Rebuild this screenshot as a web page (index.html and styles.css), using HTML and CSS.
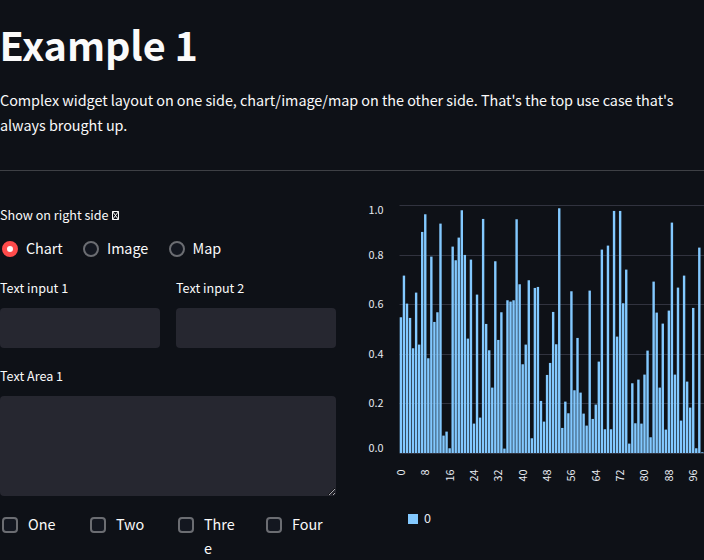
FILE: index.html
```html
<!DOCTYPE html>
<html lang="en">
<head>
<meta charset="utf-8">
<title>Example 1</title>
<link rel="stylesheet" href="styles.css">
</head>
<body>
<main class="page">
  <h1 class="title">Example 1</h1>
  <p class="intro">Complex widget layout on one side, chart/image/map on the other side. That's the top use case that's always brought up.</p>
  <hr class="divider">
  <div class="columns">
    <section class="controls">
      <div class="label">Show on right side <svg class="glyph" width="7" height="9" viewBox="0 0 7 9"><path d="M.5.5h6v8h-6zM.5.5l6 8M6.5.5l-6 8"/></svg></div>
      <div class="radios">
        <div class="radio"><span class="dot checked"></span><span>Chart</span></div>
        <div class="radio"><span class="dot"></span><span>Image</span></div>
        <div class="radio"><span class="dot"></span><span>Map</span></div>
      </div>
      <div class="inputs">
        <div class="field"><div class="label">Text input 1</div><input class="box" type="text" aria-label="Text input 1"></div>
        <div class="field"><div class="label">Text input 2</div><input class="box" type="text" aria-label="Text input 2"></div>
      </div>
      <div class="field area-field"><div class="label">Text Area 1</div><textarea class="box area" aria-label="Text Area 1"></textarea></div>
      <div class="checks">
        <div class="check"><span class="tick"></span><span class="check-text">One</span></div>
        <div class="check"><span class="tick"></span><span class="check-text">Two</span></div>
        <div class="check"><span class="tick"></span><span class="check-text">Three</span></div>
        <div class="check"><span class="tick"></span><span class="check-text">Four</span></div>
      </div>
    </section>
    <section class="chart">
      <svg class="plot" width="344" height="340" viewBox="360 195 344 340">
        <g id="grid" class="grid"></g>
        <g id="bars" class="bars"></g>
        <g id="labels" class="axis"></g>
        <rect class="swatch" x="408" y="514" width="10" height="10"/>
        <text class="legend" x="424" y="522.5">0</text>
      </svg>
    </section>
  </div>
</main>
<script src="chart.js"></script>
</body>
</html>
```
FILE: styles.css
```css
* { box-sizing: border-box; }
body {
  margin: 0;
  background: #0e1117;
  color: #fafafa;
  font-family: "Noto Sans CJK SC", sans-serif;
  font-size: 14.4px;
  line-height: 24px;
  letter-spacing: -0.035px;
  overflow: hidden;
}
.page { width: 704px; height: 560px; overflow: hidden; }
.title { margin: 0; padding: 17px 0; font-size: 39.6px; line-height: 53px; font-weight: 700; letter-spacing: -0.1px; text-indent: -0.5px; }
.intro { margin: 0; line-height: 25px; }
.divider { margin: 33px 0 0; border: 0; border-top: 1px solid #3e4045; }
.columns { display: flex; gap: 24px; padding-top: 24px; }
.controls { width: 336px; flex: none; padding-top: 9px; }
.label { font-size: 12.6px; line-height: 22px; white-space: nowrap; letter-spacing: 0; }
.glyph { margin-left: 0.6px; fill: none; stroke: #fafafa; stroke-width: 1; }
.radios { display: flex; gap: 20px; height: 24px; margin-top: 10px; }
.radio { display: flex; align-items: center; gap: 8px; padding-left: 2px; margin-right: -1.5px; letter-spacing: -0.1px; }
.dot { width: 16px; height: 16px; margin-top: 2px; border: 2px solid #6b6d72; border-radius: 50%; background: #131720; }
.dot.checked { border: 5px solid #ff4b4b; background: #fafafa; }
.inputs { display: flex; gap: 16px; margin-top: 17px; }
.field { flex: 1; }
.box { display: block; width: 100%; height: 40px; margin: 9px 0 0; padding: 0 12px; border: 0; border-radius: 4px; background: #262730; color: #fafafa; font: inherit; }
.area-field { margin-top: 17px; }
.area { height: 100px; resize: vertical; color-scheme: dark; }
.checks { display: flex; gap: 16px; margin-top: 16px; }
.check { display: flex; width: 72px; padding-left: 2px; }
.tick { flex: none; width: 16px; height: 16px; margin: 5px 10px 0 0; border: 2px solid #6b6d72; border-radius: 4px; background: #131720; }
.check-text { width: 34px; overflow-wrap: anywhere; }
.chart { width: 344px; flex: none; }
.plot { display: block; }
.grid { stroke: #31333f; stroke-width: 1; }
.bars { fill: #83c9ff; }
.swatch { fill: #83c9ff; }
.axis { fill: #e6eaf1; font-size: 10.8px; letter-spacing: 0; }
.legend { fill: #e6eaf1; font-size: 12.6px; }
```
FILE: chart.js
```js
const NS = "http://www.w3.org/2000/svg";
const tops = [366,241,325,368,459,292,448,110,57,489,184,380,351,85,721,709,759,154,195,127,45,179,430,193,685,298,667,71,386,465,577,198,434,351,760,315,319,315,72,267,507,448,255,729,278,275,617,679,539,503,350,447,39,698,619,654,288,585,428,592,655,691,286,671,628,499,163,702,151,702,47,424,47,324,223,745,564,684,553,685,538,466,726,259,352,577,385,703,346,82,538,277,676,241,559,637,338,759,157,771];
const step = 3.045;

function add(id, tag, attrs, text) {
  const el = document.createElementNS(NS, tag);
  for (const key in attrs) el.setAttribute(key, attrs[key]);
  if (text !== undefined) el.textContent = text;
  document.getElementById(id).appendChild(el);
}

tops.forEach((t, i) => {
  const y = 195 + (t + 0.8) / 3;
  add("bars", "rect", { x: 399.7 + i * step, y, width: 2.4, height: 453 - y });
});

const labelBaselines = [213.5, 258.7, 308.3, 357.8, 407.3, 451.5];
[205, 255, 304, 354, 403, 453].forEach((y, i) => {
  add("grid", "line", { x1: 399.5, x2: 704, y1: y + 0.5, y2: y + 0.5 });
  add("labels", "text", { x: 383.5, y: labelBaselines[i], "text-anchor": "end" }, (1 - i * 0.2).toFixed(1));
});

for (let v = 0; v <= 96; v += 8) {
  const x = 404.8 + v * step;
  add("labels", "text", { transform: `translate(${x} 469.5) rotate(-90)`, "text-anchor": "end" }, v);
}
```
